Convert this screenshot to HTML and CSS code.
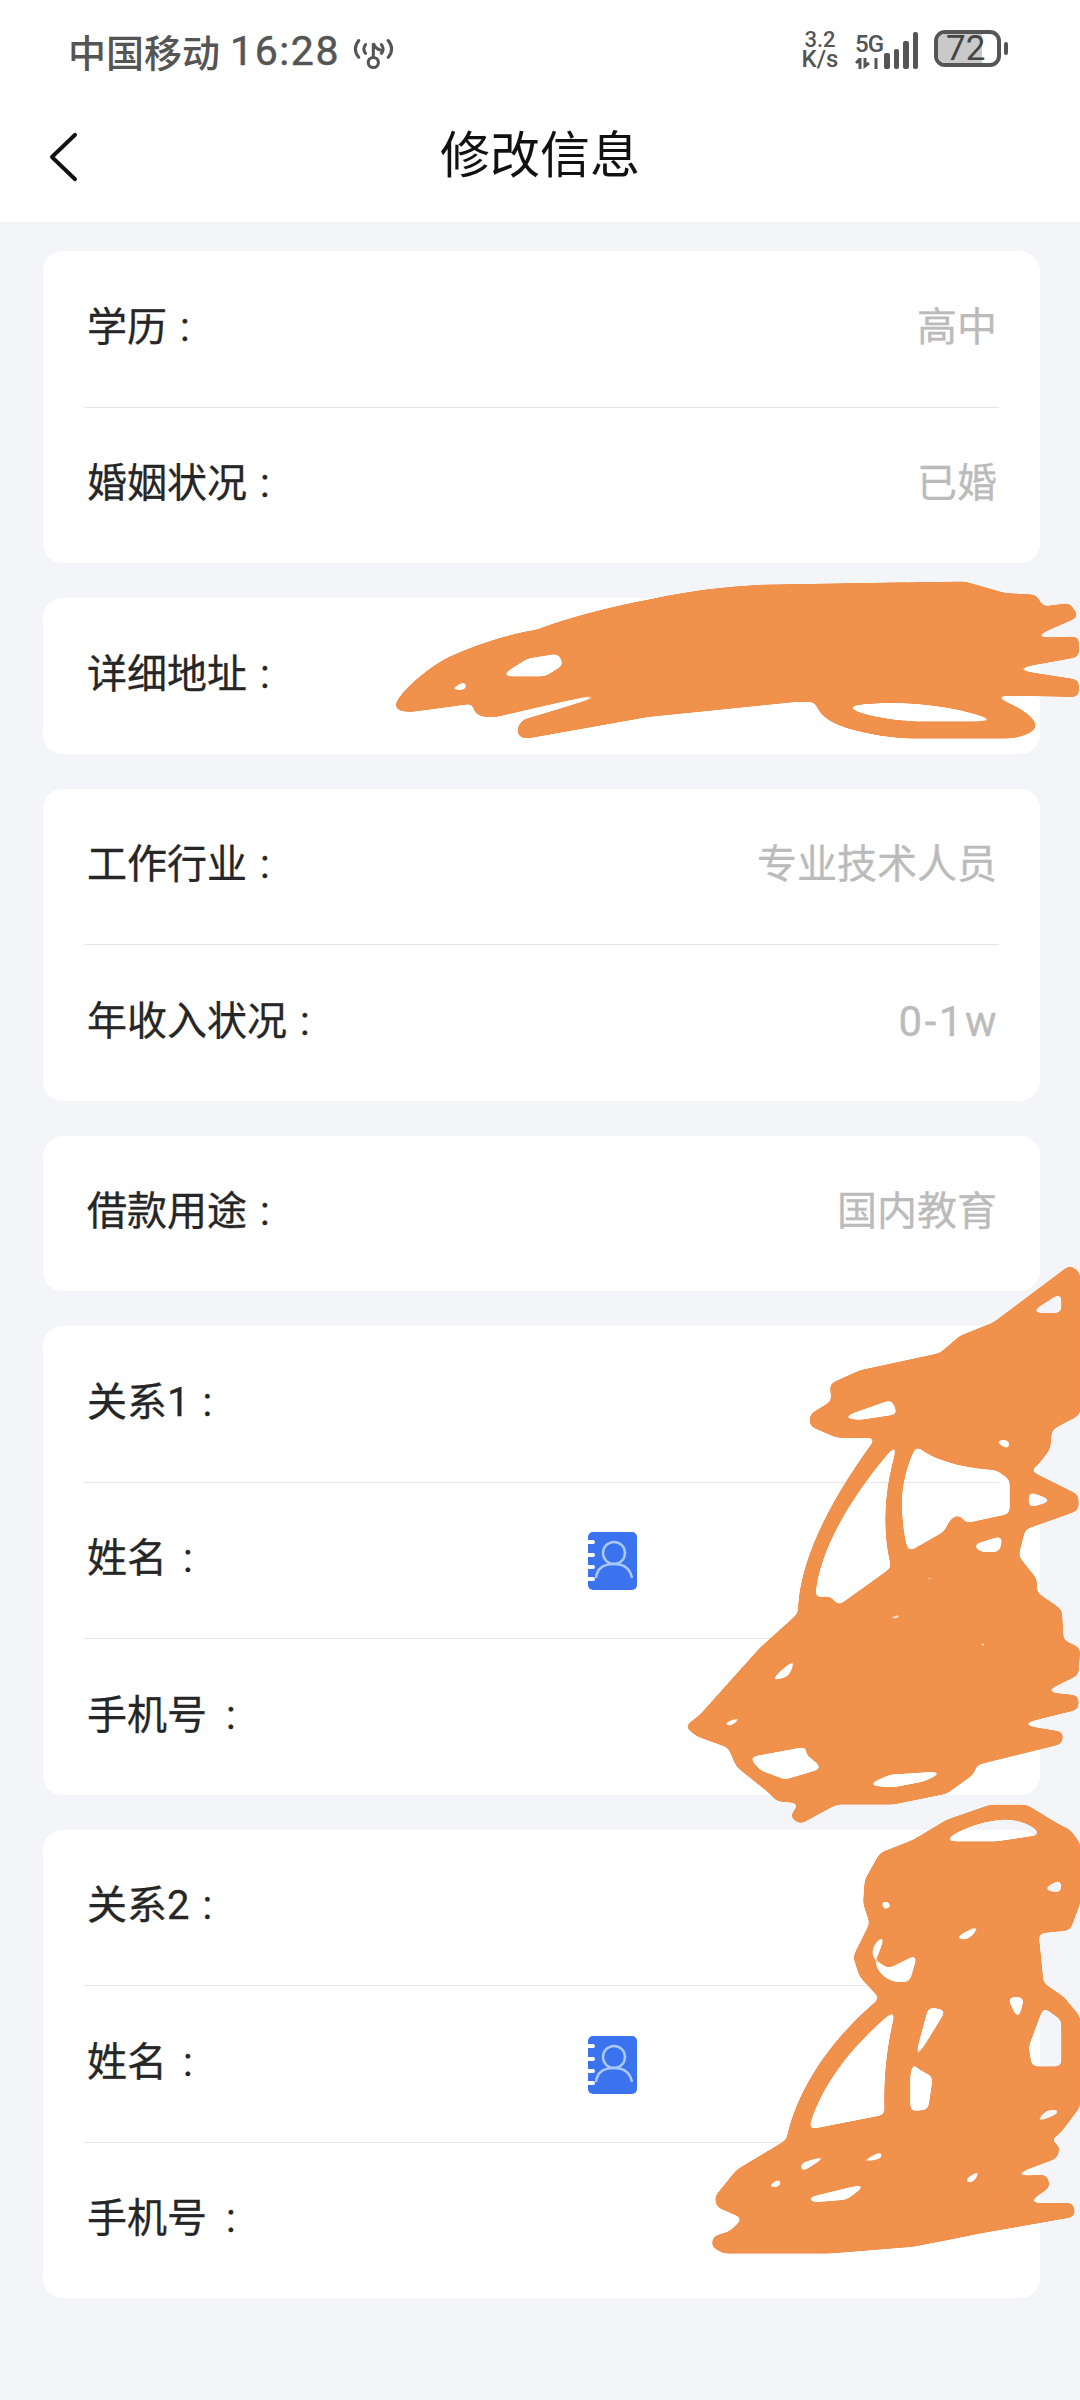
FILE: index.html
```html
<!DOCTYPE html>
<html lang="zh-CN">
<head>
<meta charset="utf-8">
<title>修改信息</title>
<link rel="stylesheet" href="styles.css">
</head>
<body>
<header class="top">
  <div class="status">
    <div class="status-left">
      <span class="carrier">中国移动</span>
      <span class="clock">16:28</span>
      <svg class="hotspot" viewBox="905 35 130 115"><path d="M925 60Q905 85 925 110M945 72Q935 85 945 98M1012 60Q1032 85 1012 110M992 72Q1002 85 992 98M968 108V68Q972 82 988 88"/><circle cx="968" cy="125" r="15"/></svg>
    </div>
    <div class="status-right">
      <div class="speed"><span class="speed-num">3.2</span><span class="speed-unit">K/s</span></div>
      <div class="net">
        <div class="net-type"><span class="five-g">5G</span><svg class="arrows" viewBox="0 0 26 11"><path d="M1 5L5 1V11M10 0V8L14 5M21 0V11"/></svg></div>
        <div class="bars"><i class="bar b1"></i><i class="bar b2"></i><i class="bar b3"></i><i class="bar b4"></i></div>
      </div>
      <div class="battery"><div class="battery-body"><span class="battery-fill"></span><span class="battery-num">72</span></div><i class="battery-tip"></i></div>
    </div>
  </div>
  <nav class="nav">
    <svg class="back" viewBox="0 0 30 50"><path d="M27 2L3 25L27 48"/></svg>
    <h1 class="title">修改信息</h1>
  </nav>
</header>
<main class="list">
  <section class="card">
    <div class="row"><span class="label">学历 :</span><span class="value">高中</span></div>
    <div class="row"><span class="label">婚姻状况 :</span><span class="value">已婚</span></div>
  </section>
  <section class="card">
    <div class="row"><span class="label">详细地址 :</span></div>
  </section>
  <section class="card">
    <div class="row"><span class="label">工作行业 :</span><span class="value">专业技术人员</span></div>
    <div class="row"><span class="label">年收入状况 :</span><span class="value value-num">0-1w</span></div>
  </section>
  <section class="card">
    <div class="row"><span class="label">借款用途 :</span><span class="value">国内教育</span></div>
  </section>
  <section class="card">
    <div class="row"><span class="label">关系1 :</span></div>
    <div class="row"><span class="label label-fixed">姓名 :</span><svg class="book" viewBox="0 0 49 58"><use href="#book-icon"/></svg></div>
    <div class="row"><span class="label label-wide">手机号 :</span></div>
  </section>
  <section class="card">
    <div class="row"><span class="label">关系2 :</span></div>
    <div class="row"><span class="label label-fixed">姓名 :</span><svg class="book" viewBox="0 0 49 58"><use href="#book-icon"/></svg></div>
    <div class="row"><span class="label label-wide">手机号 :</span></div>
  </section>
</main>
<svg class="defs" width="0" height="0"><defs><g id="book-icon"><rect class="book-cover" width="49" height="58" rx="5"/><path class="book-rings" d="M0 10H5M0 23H5M0 35H5M0 47H5"/><circle class="book-line" cx="26" cy="21" r="11"/><path class="book-line" d="M8 46C9 36 16 32 26 32S42 36 44 46"/></g></defs></svg>
<svg class="scribbles" viewBox="0 0 1080 2400">
  <defs>
    <filter id="smooth" filterUnits="userSpaceOnUse" x="0" y="0" width="1080" height="2400" color-interpolation-filters="sRGB">
      <feGaussianBlur stdDeviation="3"/>
      <feComponentTransfer><feFuncA type="linear" slope="14" intercept="-6"/></feComponentTransfer>
    </filter>
  </defs>
  <g class="ink-layer">
  <g transform="translate(380 570) scale(.4464 .3333)">
    <path class="ink" d="M35 405C40 375 100 300 150 265C220 220 300 190 350 180C450 130 560 100 600 90C720 55 800 50 850 45L1310 35L1400 70L1470 75L1485 110L1545 100L1565 140L1455 205L1565 200L1565 260L1410 298L1565 330L1565 380L1360 375C1420 400 1470 440 1470 470C1460 495 1420 505 1400 505L1200 505C1130 505 1050 480 1020 460C990 440 980 420 975 395L930 395L600 440L330 505C305 505 300 480 320 450L510 375L470 375L260 440C220 445 205 430 210 400L70 425C40 425 30 415 35 405ZM1040 410C1100 395 1200 390 1300 420L1400 455L1200 455C1130 450 1080 435 1040 410ZM265 320L330 265L400 250L412 285L370 320ZM140 365L195 330L195 360ZM510 210L560 197L530 208ZM690 197L775 187L730 197ZM1115 240L1180 230L1145 248ZM490 295L550 285L510 290ZM750 320L800 310L845 318Z"/>
  </g>
  <g transform="translate(660 1250) scale(.3333 .3827)">
    <path class="ink" d="M1230 40L1260 60L1260 430L1175 470L1170 520L1130 565L1105 575L1255 640L1255 680L1095 730L1075 800L1130 860L1130 895L1205 940L1210 1020L1260 1040L1255 1110L1150 1155L1255 1165L1255 1200L1070 1240L1210 1260L1205 1290L950 1345L940 1370L860 1420L700 1448L530 1448L420 1500L390 1480L420 1445L350 1440L330 1420L230 1350L205 1300L110 1270L75 1245L120 1215L300 1040L415 950C415 850 470 700 650 490L530 490L450 460L450 430L515 395L510 350L600 315L840 270L900 225L1000 190ZM465 910C470 800 560 650 720 495C680 590 660 720 695 830L535 930L510 905ZM725 660C725 600 750 540 770 510C810 545 900 570 1010 575L1050 600L1050 690L915 715C905 685 875 685 855 735L745 790C730 750 725 700 725 660ZM1105 630L1185 655L1105 675ZM1105 165L1205 110L1205 165ZM530 440L695 390L715 430L600 445ZM850 490L945 525L890 510ZM990 495L1050 525L1050 495ZM760 865L810 850L850 865ZM600 975L740 945L720 965ZM315 1135L420 1055L385 1115ZM165 1245L285 1200L215 1245ZM265 1325L480 1290L430 1310L490 1355L375 1385L300 1360ZM610 1400L690 1370L870 1360L790 1390L700 1405ZM1100 1060L1200 1065L1140 1075ZM985 1160L1010 1125L1030 1130ZM935 770L1030 745L1020 790L960 790ZM955 1025L980 1020L980 1040L958 1040Z"/>
  </g>
  <g transform="translate(680 1790) scale(.3333)">
    <path class="ink" d="M930 45L1040 45L1130 100L1170 120L1200 160L1200 340L1170 420L1075 430L1090 580L1150 620L1200 680L1200 950L1140 1030L1110 1050L1140 1070L1130 1105L980 1160L1100 1155L1110 1190L1040 1240L1180 1240L1185 1280L900 1330L700 1370L450 1390L130 1390L95 1370L100 1340L150 1325L190 1285L110 1250L105 1220L170 1140L320 1050C350 900 450 750 600 625L540 560L520 500L570 400L550 340L555 270L600 190L700 150L800 90ZM790 155C840 110 950 80 1000 90C1040 95 1070 115 1085 135L950 155ZM660 245L720 235L665 255ZM600 325L645 345L610 365ZM575 490C575 470 595 440 620 430L590 510L625 535L715 490L690 575C640 585 590 570 575 490ZM385 1020C420 880 530 750 650 655C620 760 610 880 615 975ZM745 650L800 660L720 790L705 830L760 860L745 960L690 965L690 850ZM1090 650L1145 690L1145 830L1055 830L1045 770ZM980 620L1035 620L1015 695ZM1080 300L1145 265L1145 310ZM1030 350L1110 360L1110 370L1030 360ZM810 450L920 390L875 440L860 450ZM1045 1010L1100 960L1145 955L1140 970ZM360 1120L490 1075L360 1150ZM480 1140L610 1080L610 1105ZM370 1225L575 1175L500 1230L400 1238ZM240 1200L305 1160L305 1190ZM840 1180L920 1120L880 1180ZM845 1245L960 1220L850 1255Z"/>
  </g>
  </g>
</svg>
</body>
</html>
```

FILE: styles.css
```css
* { box-sizing: border-box; }
html, body { margin: 0; padding: 0; }
body {
  position: relative;
  width: 1080px;
  height: 2400px;
  overflow: hidden;
  background: #f3f5f9;
  font-family: Roboto, "Noto Sans CJK SC", sans-serif;
  color: #222;
}
.top { background: #fff; height: 222px; }
.status {
  height: 98px;
  padding: 30px 72px 0 68px;
  display: flex;
  justify-content: space-between;
  align-items: flex-start;
  color: #555;
}
.status-left { display: flex; align-items: center; height: 42px; }
.carrier { font: 500 38px/42px "Noto Sans CJK SC", sans-serif; }
.clock { margin-left: 10px; font: 400 41px/42px Roboto, sans-serif; -webkit-text-stroke: 0.5px #555; letter-spacing: 1.6px; }
.hotspot { width: 44px; height: 39px; margin-left: 12px; fill: none; stroke: #555; stroke-width: 9; stroke-linecap: round; }
.status-right { display: flex; align-items: flex-start; height: 40px; }
.speed { display: flex; flex-direction: column; align-items: center; width: 38px; font-family: Roboto, sans-serif; font-weight: 500; }
.speed-num { font-size: 22px; line-height: 19px; }
.speed-unit { font-size: 24px; line-height: 21px; }
.net { display: flex; align-items: flex-end; margin-left: 16px; height: 39px; gap: 3px; }
.net-type { display: flex; flex-direction: column; width: 26px; }
.five-g { font: 500 24px/22px Roboto, sans-serif; letter-spacing: -1px; }
.arrows { width: 26px; height: 11px; margin-top: 3px; fill: none; stroke: #555; stroke-width: 3; }
.bars { display: flex; align-items: flex-end; gap: 4px; }
.bar { display: block; width: 5.5px; background: #555; border-radius: 2px; }
.b1 { height: 16px; }
.b2 { height: 20px; }
.b3 { height: 28px; }
.b4 { height: 37px; }
.battery { display: flex; align-items: center; margin-left: 16px; }
.battery-body {
  position: relative;
  width: 67px;
  height: 37px;
  border: 4px solid #555;
  border-radius: 11px;
  display: flex;
  align-items: center;
}
.battery-fill { position: absolute; inset: 0 15px 0 0; background: #c9c9c9; border-radius: 7px 0 0 7px; }
.battery-num { position: relative; margin-left: 8px; font: 400 35px/29px Roboto, sans-serif; color: #444; }
.battery-tip { display: block; width: 4px; height: 13px; margin-left: 3px; background: #555; border-radius: 2px; }
.nav { position: relative; height: 124px; display: flex; align-items: center; justify-content: center; padding-bottom: 18px; }
.back { position: absolute; left: 49px; top: 34px; width: 29px; height: 50px; fill: none; stroke: #111; stroke-width: 4; stroke-linecap: round; stroke-linejoin: round; }
.title { margin: 0; font: 400 50px/60px "Noto Sans CJK SC", sans-serif; color: #111; }
.list { padding: 29px 40px 0 43px; display: flex; flex-direction: column; gap: 35px; }
.card { background: #fff; border-radius: 20px; padding: 0 41px; }
.row {
  height: 156.5px;
  padding: 0 2px 2px 3px;
  display: flex;
  align-items: center;
  font: 400 40px/56px Roboto, "Noto Sans CJK SC", sans-serif;
  border-top: 1px solid #e6e6e8;
}
.row:first-child { height: 155.5px; border-top: 0; }
.label { color: #262626; word-spacing: 3px; white-space: nowrap; -webkit-text-stroke: 0.3px #262626; }
.label-fixed { width: 501px; flex: none; word-spacing: 6px; }
.label-wide { word-spacing: 9px; }
.value { margin-left: auto; color: #bbb; white-space: nowrap; -webkit-text-stroke: 0.3px #bbb; }
.value-num { font-size: 42px; letter-spacing: 2.5px; margin-right: -2px; }
.book { width: 49px; height: 58px; flex: none; margin-top: 4px; }
.book-cover { fill: #3b73ee; }
.book-rings { fill: none; stroke: #fff; stroke-width: 4; stroke-linecap: round; }
.book-line { fill: none; stroke: #a9c8fb; stroke-width: 2.5; }
.defs { position: absolute; }
.scribbles { position: absolute; left: 0; top: 0; width: 1080px; height: 2400px; pointer-events: none; }
.ink-layer { filter: url(#smooth); }
.ink { fill: #f0914c; fill-rule: evenodd; }
```
